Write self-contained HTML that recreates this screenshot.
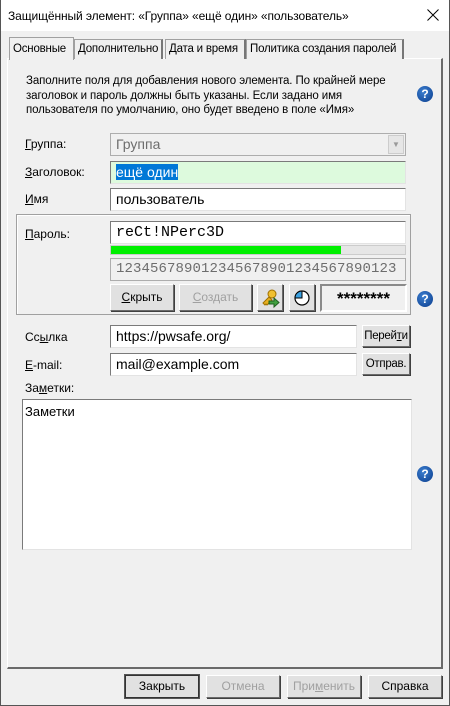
<!DOCTYPE html>
<html><head><meta charset="utf-8"><style>
*{box-sizing:border-box;margin:0;padding:0}
body{width:450px;height:706px;background:#f0f0f0;font-family:"Liberation Sans","DejaVu Sans",sans-serif;font-size:12px;color:#000;position:relative;overflow:hidden}
.a{position:absolute}
.win{left:0;top:0;width:450px;height:706px;border:1px solid #555;border-top:none}
.title{left:1px;top:0;width:448px;height:31px;background:#fff}
.edit{position:absolute;background:#fff;border:1px solid #7a7a7a;border-right-color:#e3e3e3;border-bottom-color:#e3e3e3;padding:2px 5px;font-size:14px;line-height:17px;white-space:nowrap;overflow:hidden}
.btn{position:absolute;background:#e1e1e1;border:1px solid #fff;border-right-color:#6a6a6a;border-bottom-color:#6a6a6a;box-shadow:1px 1px 0 #404040;text-align:center;font-size:12px}
.dis{color:#a0a0a0}
.help{position:absolute;width:16px;height:16px;border-radius:50%;background:radial-gradient(circle at 40% 35%,#3c7fd0,#0a3c8c);color:#fff;font-weight:bold;font-size:12px;line-height:16px;text-align:center}
.tab{position:absolute;top:39px;height:20px;border:1px solid #a0a0a0;border-bottom:none;border-right:2px solid #777;background:#f0f0f0;padding:3px 3px;font-size:11.5px;letter-spacing:-0.2px;white-space:nowrap}
u{text-decoration:underline}
</style></head><body>
<div class="a title"></div>
<div class="a" style="left:8px;top:9px;font-size:12px;letter-spacing:-0.1px">Защищённый элемент: «Группа» «ещё один» «пользователь»</div>
<svg class="a" style="left:427px;top:9px" width="12" height="12" viewBox="0 0 12 12"><path d="M0.5 0.5L11.5 11.5M11.5 0.5L0.5 11.5" stroke="#000" stroke-width="1"/></svg>
<div class="a win"></div>
<div class="a" style="left:7px;top:58px;width:436px;height:611px;border:1px solid #fff;border-right:2px solid #6a6a6a;border-bottom:2px solid #6a6a6a"></div>
<div class="tab" style="left:9px;top:37px;height:23px;width:65px;border-right:1px solid #a0a0a0;padding-top:5px;z-index:2">Основные</div>
<div class="tab" style="left:74px;width:89px">Дополнительно</div>
<div class="tab" style="left:165px;width:81px">Дата и время</div>
<div class="tab" style="left:246px;width:158px">Политика создания паролей</div>
<div class="a" style="left:26px;top:74px;line-height:14.5px;font-size:11.5px;letter-spacing:-0.1px">Заполните поля для добавления нового элемента. По крайней мере<br>заголовок и пароль должны быть указаны. Если задано имя<br>пользователя по умолчанию, оно будет введено в поле «Имя»</div>
<div class="help" style="left:417px;top:86px">?</div>
<div class="a" style="left:25px;top:137px"><u>Г</u>руппа:</div>
<div class="edit" style="left:110px;top:133px;width:296px;height:23px;background:#f0f0f0;color:#6d6d6d;border-color:#adadad">Группа</div>
<div class="a" style="left:388px;top:135px;width:16px;height:19px;background:#e6e6e6;border:1px solid #ccc;color:#999;font-size:8px;text-align:center;line-height:18px">▼</div>
<div class="a" style="left:25px;top:165px"><u>З</u>аголовок:</div>
<div class="edit" style="left:110px;top:161px;width:296px;height:23px;background:#ddfadd"><span style="background:#0078d7;color:#fff">ещё один</span></div>
<div class="a" style="left:25px;top:192px"><u>И</u>мя</div>
<div class="edit" style="left:110px;top:188px;width:296px;height:23px">пользователь</div>
<div class="a" style="left:16px;top:214px;width:395px;height:101px;border:1px solid #a0a0a0;box-shadow:1px 1px 0 #fff inset"></div>
<div class="a" style="left:25px;top:227px"><u>П</u>ароль:</div>
<div class="edit" style="left:110px;top:221px;width:296px;height:23px;font-family:'Liberation Mono',monospace;font-size:15px">reCt!NPerc3D</div>
<div class="a" style="left:110px;top:245px;width:296px;height:10px;background:#e6e6e6;border:1px solid #ccc"></div>
<div class="a" style="left:111px;top:246px;width:230px;height:8px;background:#00f000"></div>
<div class="edit" style="left:110px;top:258px;width:296px;height:23px;background:#f0f0f0;color:#6d6d6d;border-color:#adadad;font-family:'Liberation Mono',monospace;font-size:14px;letter-spacing:0.1px;padding-left:5px">123456789012345678901234567890123</div>
<div class="btn" style="left:110px;top:284px;width:64px;height:27px;line-height:25px"><u>С</u>крыть</div>
<div class="btn dis" style="left:179px;top:284px;width:73px;height:27px;line-height:25px"><u>С</u>оздать</div>
<div class="btn" style="left:257px;top:284px;width:26px;height:27px">
<svg width="22" height="22" viewBox="0 0 22 22" style="margin-top:2px"><circle cx="13" cy="7" r="4" fill="#f0c030" stroke="#a07000"/><path d="M10 10 L4 16 L6 18 L7 17 L8 18 L13 13Z" fill="#e8b020" stroke="#a07000"/><path d="M10 14h5v-3l5 4.5-5 4.5v-3h-5z" fill="#40a040" stroke="#206020"/></svg></div>
<div class="btn" style="left:289px;top:284px;width:26px;height:27px">
<svg width="20" height="20" viewBox="0 0 20 20" style="margin-top:3px"><circle cx="10" cy="10" r="7" fill="#fff" stroke="#000" stroke-width="1.2"/><path d="M10 10V3A7 7 0 0 0 3 10Z" fill="#3aa0e0" stroke="#000"/></svg></div>
<div class="a" style="left:320px;top:284px;width:87px;height:28px;border:2px solid #8a8a8a;border-right-color:#fff;border-bottom-color:#fff;font-size:17px;font-weight:bold;text-align:center;line-height:26px;letter-spacing:0px">********</div>
<div class="help" style="left:417px;top:291px">?</div>
<div class="a" style="left:25px;top:330px">Сс<u>ы</u>лка</div>
<div class="edit" style="left:110px;top:325px;width:247px;height:23px">https://pwsafe.org/</div>
<div class="btn" style="left:362px;top:325px;width:48px;height:22px;line-height:20px;font-size:11.5px;letter-spacing:-0.3px">Перей<u>т</u>и</div>
<div class="a" style="left:25px;top:358px"><u>E</u>-mail:</div>
<div class="edit" style="left:110px;top:353px;width:247px;height:23px">mail@example.com</div>
<div class="btn" style="left:362px;top:353px;width:48px;height:22px;line-height:20px;font-size:11.5px;letter-spacing:-0.3px">Отправ.</div>
<div class="a" style="left:25px;top:381px">За<u>м</u>етки:</div>
<div class="edit" style="left:22px;top:399px;width:390px;height:151px;font-size:13px;padding:3px 2px">Заметки</div>
<div class="help" style="left:417px;top:466px">?</div>
<div class="btn" style="left:125px;top:675px;width:74px;height:23px;line-height:21px;border:1px solid #333;box-shadow:none;outline:1px solid #555">Закрыть</div>
<div class="btn dis" style="left:206px;top:675px;width:74px;height:23px;line-height:21px">Отмена</div>
<div class="btn dis" style="left:287px;top:675px;width:74px;height:23px;line-height:21px">При<u>м</u>енить</div>
<div class="btn" style="left:368px;top:675px;width:74px;height:23px;line-height:21px">Справка</div>
</body></html>
